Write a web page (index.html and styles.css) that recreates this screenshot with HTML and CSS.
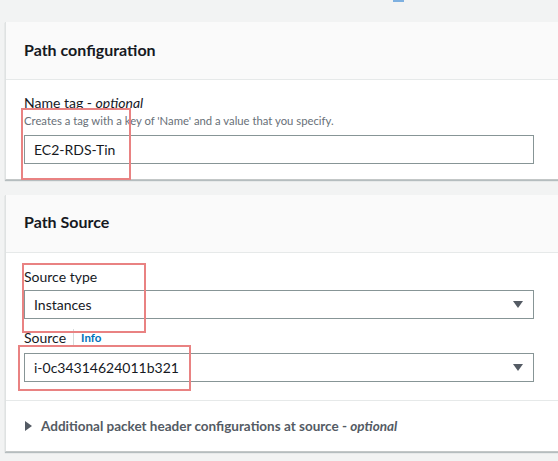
FILE: index.html
```html
<!DOCTYPE html>
<html>
<head>
<meta charset="utf-8">
<link rel="stylesheet" href="styles.css">
</head>
<body>
<div class="topmark"></div>
<div class="page">
  <section class="card card-config">
    <div class="card-head"><h2>Path configuration</h2></div>
    <div class="card-body">
      <div class="field">
        <div class="label">Name tag - <i>optional</i></div>
        <div class="desc">Creates a tag with a key of 'Name' and a value that you specify.</div>
        <div class="input">EC2-RDS-Tin</div>
      </div>
    </div>
  </section>

  <section class="card card-source">
    <div class="card-head"><h2>Path Source</h2></div>
    <div class="card-body">
      <div class="field">
        <div class="label">Source type</div>
        <div class="input select"><span>Instances</span><span class="caret"></span></div>
      </div>
      <div class="field field-source">
        <div class="label label-flex"><span class="lbl">Source</span><span class="info">Info</span></div>
        <div class="input select"><span>i-0c34314624011b321</span><span class="caret"></span></div>
      </div>
    </div>
    <div class="card-foot">
      <span class="tri"></span><span class="foot-text">Additional packet header configurations at source - <i>optional</i></span>
    </div>
  </section>
</div>
<div class="mark mark1"></div>
<div class="mark mark2"></div>
<div class="mark mark3"></div>
</body>
</html>
```

FILE: styles.css
```css
* { box-sizing: border-box; }
html, body { margin: 0; padding: 0; }
body {
  background: #f2f3f3;
  font-family: Lato, "Open Sans", "Liberation Sans", sans-serif;
  color: #16191f;
  width: 558px;
  height: 461px;
  overflow: hidden;
  position: relative;
}
.topmark {
  position: absolute;
  left: 393px;
  top: 0;
  width: 11px;
  height: 2px;
  background: #7eb0e0;
}
.page {
  padding: 22px 0 0 5px;
  display: flex;
  flex-direction: column;
  gap: 15px;
}
.card {
  background: #fff;
  border-left: 1px solid #dfe2e2;
  border-bottom: 1px solid #c3c7c7;
  box-shadow: 0 1px 1px rgba(0,28,36,0.25);
  width: 560px;
}
.card-head {
  background: #fafafa;
  border-bottom: 1px solid #e6e9e9;
  height: 58px;
  padding-left: 18px;
  display: flex;
  align-items: center;
}
.card-head h2 {
  margin: 0;
  font-size: 16px;
  font-weight: 700;
  line-height: 20px;
  margin-top: -2px;
}
.card-source .card-head h2 { margin-top: -3px; }
.card-body {
  padding: 13px 0 18px 18px;
}
.card-config { height: 158px; }
.label {
  font-size: 14px;
  line-height: 20px;
}
.label-flex { display: flex; align-items: center; }
.label i { font-style: italic; }
.desc {
  font-size: 11.3px;
  color: #687078;
  line-height: 16px;
  margin-bottom: 6px;
}
.input {
  width: 510px;
  height: 29px;
  border: 1px solid #879596;
  font-size: 14px;
  padding-left: 9px;
  display: flex;
  align-items: center;
  background: #fff;
}
.select { justify-content: space-between; padding-right: 10px; }
.caret {
  width: 0; height: 0;
  border-left: 5px solid transparent;
  border-right: 5px solid transparent;
  border-top: 7px solid #545b64;
}
.card-source .card-body { padding: 14px 0 18px 18px; }
.card-source .label { margin-bottom: 3px; }
.field-source { margin-top: 9px; }
.card-source .field-source .label { margin-bottom: 5px; }
.lbl { padding-right: 7px; border-right: 1px solid #d5dbdb; line-height: 18px; }
.info { color: #0073bb; font-weight: 700; font-size: 11.5px; padding-left: 7px; }
.card-foot {
  border-top: 1px solid #e6e9e9;
  height: 51px;
  padding-left: 19px;
  display: flex;
  align-items: center;
  gap: 9px;
}
.tri {
  width: 0; height: 0;
  border-top: 5px solid transparent;
  border-bottom: 5px solid transparent;
  border-left: 7px solid #545b64;
}
.foot-text { font-size: 13.5px; font-weight: 700; color: #545b64; }
.foot-text i { color: #545b64; }
.mark {
  position: absolute;
  border: 2px solid #e98282;
}
.mark1 { left: 21px; top: 108px; width: 110px; height: 72px; }
.mark2 { left: 22px; top: 263px; width: 124px; height: 70px; }
.mark3 { left: 18px; top: 345px; width: 173px; height: 46px; }
```
